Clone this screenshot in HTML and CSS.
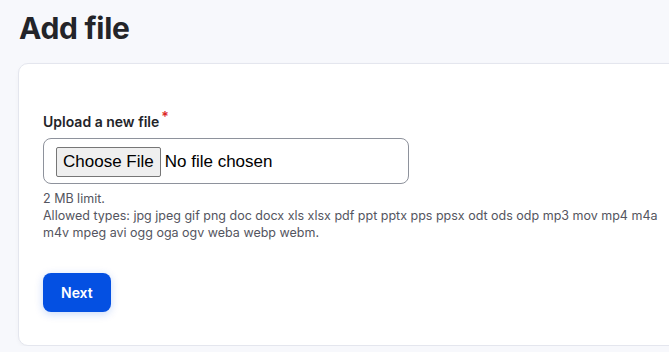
FILE: index.html
```html
<!DOCTYPE html>
<html lang="en">
<head>
  <meta charset="UTF-8" />
  <title>Add file</title>
  <meta name="viewport" content="width=device-width, initial-scale=1.0" />
  <link rel="stylesheet" href="styles.css">
</head>
<body>
  <h1 class="page-title">Add file</h1>

  <form class="card">
    <div class="form-item">
      <label for="upload" class="form-label required">Upload a new file</label>
      <input type="file" id="upload" class="form-file" />
      <div class="description">
        2 MB limit.<br>
        Allowed types: jpg jpeg gif png doc docx xls xlsx pdf ppt pptx pps ppsx odt ods odp mp3 mov mp4 m4a m4v mpeg avi ogg oga ogv weba webp webm.
      </div>
    </div>

    <div class="form-actions">
      <button type="button" class="button-primary">Next</button>
    </div>
  </form>
</body>
</html>
```

FILE: styles.css
```css
:root {
  --bg: #f7f8fc;
  --text: #232429;
  --muted: #545560;
  --border: #8e929c;
  --card-border: #e4e6ee;
  --primary: #0450e2;
  --required: #dc2626;
}

html, body {
  overflow: hidden;
}

body {
  margin: 0;
  background: var(--bg);
  color: var(--text);
  font-family: Inter, 'Noto Sans', sans-serif;
}

.page-title {
  margin: 10px 0 17px 19px;
  font-size: 30px;
  line-height: 36px;
  font-weight: 700;
  letter-spacing: -0.3px;
}

.card {
  box-sizing: border-box;
  width: 680px;
  margin-left: 18px;
  padding: 49px 24px 33px;
  background: #fff;
  border: 1px solid var(--card-border);
  border-radius: 10px;
  box-shadow: 0 2px 4px rgba(0, 0, 0, 0.03);
}

.form-label {
  display: block;
  margin-bottom: 7px;
  font-size: 14px;
  line-height: 18px;
  font-weight: 600;
}

.form-label.required::after {
  content: "*";
  margin-left: 2px;
  color: var(--required);
  font-size: 14px;
  vertical-align: 5px;
  line-height: 0;
}

.form-file {
  box-sizing: border-box;
  width: 366px;
  height: 46px;
  padding: 8px 12px 6px;
  border: 1px solid var(--border);
  border-radius: 8px;
  font-family: 'Liberation Sans', Arial, sans-serif;
  font-size: 17px;
  color: #000;
  background: #fff;
}

.form-file::file-selector-button {
  height: 30px;
  padding: 0 6px;
  margin-right: 4px;
  font: inherit;
  background: #efefef;
  border: 1px solid #767676;
  border-radius: 2px;
  color: #000;
}

.description {
  margin-top: 6px;
  font-size: 12.5px;
  line-height: 17px;
  color: var(--muted);
}

.form-actions {
  margin-top: 32px;
}

.button-primary {
  padding: 10px 18px;
  font-family: inherit;
  font-size: 14px;
  line-height: 19px;
  font-weight: 600;
  color: #fff;
  background: var(--primary);
  border: none;
  border-radius: 8px;
  box-shadow: 0 2px 8px rgba(4, 80, 226, 0.22);
  cursor: pointer;
}
```
